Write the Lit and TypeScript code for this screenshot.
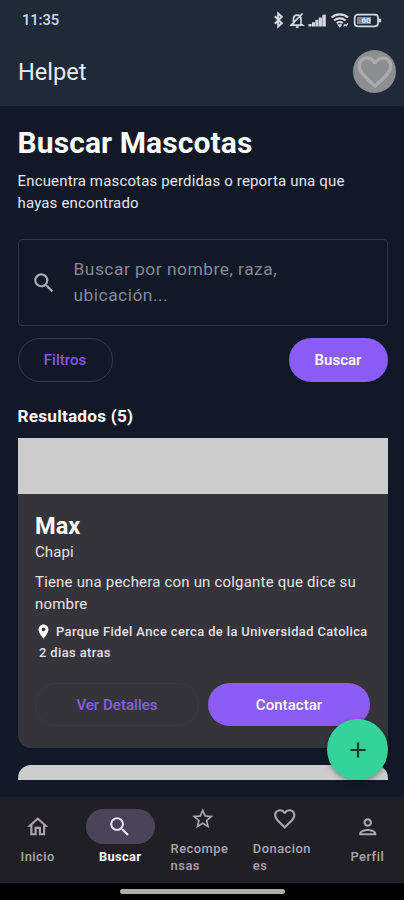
import { LitElement, html, svg, css } from "lit";
import { customElement, property } from "lit/decorators.js";

const ICONS: Record<string, string> = {
  search:
    "M15.5 14h-.79l-.28-.27A6.47 6.47 0 0 0 16 9.5 6.5 6.5 0 1 0 9.5 16c1.61 0 3.09-.59 4.23-1.57l.27.28v.79l5 4.99L20.49 19l-4.99-5zm-6 0C7.01 14 5 11.99 5 9.5S7.01 5 9.5 5 14 7.01 14 9.5 11.99 14 9.5 14z",
  home: "M12 5.69l5 4.5V18h-2v-6H9v6H7v-7.81l5-4.5M12 3L2 12h3v8h6v-6h2v6h6v-8h3L12 3z",
  star: "M22 9.24l-7.19-.62L12 2 9.19 8.63 2 9.24l5.46 4.73L5.82 21 12 17.27 18.18 21l-1.63-7.03L22 9.24zM12 15.4l-3.76 2.27 1-4.28-3.32-2.88 4.38-.38L12 6.1l1.71 4.04 4.38.38-3.32 2.88 1 4.28L12 15.4z",
  heart:
    "M16.5 3c-1.74 0-3.41.81-4.5 2.09C10.91 3.81 9.24 3 7.5 3 4.42 3 2 5.42 2 8.5c0 3.78 3.4 6.86 8.55 11.54L12 21.35l1.45-1.32C18.6 15.36 22 12.28 22 8.5 22 5.42 19.58 3 16.5 3zm-4.4 15.55l-.1.1-.1-.1C7.14 14.24 4 11.39 4 8.5 4 6.5 5.5 5 7.5 5c1.54 0 3.04.99 3.57 2.36h1.87C13.46 5.99 14.96 5 16.5 5c2 0 3.5 1.5 3.5 3.5 0 2.89-3.14 5.74-7.9 10.05z",
  person:
    "M12 6a2 2 0 1 1 0 4 2 2 0 0 1 0-4m0 10c2.7 0 5.8 1.29 6 2H6c.23-.72 3.31-2 6-2m0-12C9.79 4 8 5.79 8 8s1.79 4 4 4 4-1.79 4-4-1.79-4-4-4zm0 10c-2.67 0-8 1.34-8 4v2h16v-2c0-2.66-5.33-4-8-4z",
  place:
    "M12 2C8.13 2 5 5.13 5 9c0 5.25 7 13 7 13s7-7.75 7-13c0-3.87-3.13-7-7-7zm0 9.5a2.5 2.5 0 1 1 0-5 2.5 2.5 0 0 1 0 5z",
  add: "M19 13h-6v6h-2v-6H5v-2h6V5h2v6h6v2z",
};

@customElement("app-icon")
export class AppIcon extends LitElement {
  @property() name = "";
  static styles = css`
    :host { display: block; flex: none; width: 26px; height: 26px; }
    svg { display: block; width: 100%; height: 100%; fill: currentColor; }
  `;
  render() {
    return html`<svg viewBox="0 0 24 24">${svg`<path d=${ICONS[this.name] ?? ""}></path>`}</svg>`;
  }
}

@customElement("status-bar")
export class StatusBar extends LitElement {
  static styles = css`
    :host { display: flex; justify-content: space-between; align-items: center; height: 40px; padding: 0 21.5px 0 22px; color: #d5d9df; }
    .time { font-size: 14.8px; font-weight: 500; letter-spacing: -0.1px; }
    svg { display: block; }
    .level { font: 700 8px "Roboto", sans-serif; fill: #e4e7eb; }
  `;
  render() {
    return html`
      <span class="time">11:35</span>
      <svg width="110" height="18" viewBox="0 0 110 18" fill="none" stroke="#d5d9df" stroke-width="1.7">
        <path d="M1.8 5.3l7 7-3.6 3.3V2.4l3.6 3.3-7 7" stroke-width="2" />
        <path d="M20.5 13V8.4c0-2.4 1.3-4.2 3.7-4.2S28 6 28 8.4V13l1.5 1.2H18.8L20.5 13M22.8 16.2h2.8M17.6 14.7L29.6 2.5" />
        <g fill="#d5d9df" stroke="none">
          <rect x="35.5" y="13" width="3" height="2.5" />
          <rect x="39" y="11.2" width="3" height="4.3" />
          <rect x="42.4" y="8.9" width="3" height="6.6" />
          <rect x="45.8" y="6.5" width="3.1" height="9" />
          <rect x="49.3" y="3.7" width="3.5" height="11.8" />
        </g>
        <path d="M58.5 6.5c4.8-4.2 11.8-4.2 16.6 0M61.1 9.5c3.3-2.8 8.1-2.8 11.4 0M63.8 12.2c1.8-1.4 4.2-1.4 6 0" stroke-width="2.1" />
        <path d="M66.8 15.8l-1.6-2h3.2zM70.5 15.5l1.5-2 1.2 1.4 1.6-2.5" stroke-width="1.1" fill="#d5d9df" />
        <rect x="81.7" y="3.7" width="23.3" height="11.6" rx="3" />
        <path d="M107 7.7v3.6" stroke-width="2.2" />
        <rect x="84" y="6" width="14" height="7" fill="#7f8793" stroke="none" />
        <text class="level" x="88.5" y="12.4" stroke="none">60</text>
      </svg>
    `;
  }
}

@customElement("pet-card")
export class PetCard extends LitElement {
  static styles = css`
    :host { display: block; height: 310px; background: #36343b; border-radius: 0 0 13px 13px; overflow: hidden; color: #e4e2e7; }
    .photo { height: 56px; background: #cccccc; }
    .body { padding: 18px 17.5px 0 17.5px; }
    .name { font-size: 23.6px; line-height: 28px; font-weight: 700; color: #fff; }
    .breed { font-size: 15px; line-height: 22px; letter-spacing: 0.1px; margin-top: 1px; }
    .about { font-size: 15px; line-height: 21.5px; letter-spacing: 0.19px; margin-top: 9px; white-space: nowrap; }
    .meta { font-size: 12.9px; line-height: 21px; letter-spacing: 0.4px; font-weight: 500; }
    .place { display: flex; align-items: center; margin-top: 6px; white-space: nowrap; }
    .place app-icon { width: 17px; height: 17px; color: #fff; margin-right: 4px; }
    .ago { padding-left: 4px; }
    .actions { display: flex; gap: 9px; margin-top: 20px; }
    .btn { flex: 1; height: 43px; box-sizing: border-box; border-radius: 22px; display: flex; align-items: center; justify-content: center; font-size: 15px; font-weight: 500; letter-spacing: 0.04px; }
    .outlined { border: 1px solid #3a3a42; color: #8660df; }
    .filled { background: #8b5cf6; color: #fff; }
  `;
  render() {
    return html`
      <div class="photo"></div>
      <div class="body">
        <div class="name">Max</div>
        <div class="breed">Chapi</div>
        <div class="about">Tiene una pechera con un colgante que dice su<br />nombre</div>
        <div class="meta place"><app-icon name="place"></app-icon><span>Parque Fidel Ance cerca de la Universidad Catolica</span></div>
        <div class="meta ago">2 dias atras</div>
        <div class="actions">
          <div class="btn outlined">Ver Detalles</div>
          <div class="btn filled">Contactar</div>
        </div>
      </div>
    `;
  }
}

const TABS = [
  { icon: "home", lines: ["Inicio"] },
  { icon: "search", lines: ["Buscar"], active: true },
  { icon: "star", lines: ["Recompe", "nsas"] },
  { icon: "heart", lines: ["Donacion", "es"] },
  { icon: "person", lines: ["Perfil"] },
];

@customElement("bottom-nav")
export class BottomNav extends LitElement {
  static styles = css`
    :host { display: flex; gap: 9px; height: 86px; box-sizing: border-box; padding: 0 0 5px 1px; background: #211f26; color: #a9a6b0; }
    .tab { flex: 1; display: flex; flex-direction: column; align-items: center; justify-content: center; }
    .pill { width: 69px; height: 35px; border-radius: 18px; display: flex; align-items: center; justify-content: center; }
    .pill app-icon { width: 25.5px; height: 25.5px; }
    .label { font-size: 12.9px; line-height: 17.2px; font-weight: 500; letter-spacing: 0.48px; margin-top: 4px; white-space: nowrap; }
    .wrapped { margin-right: 6px; }
    .active { color: #fff; }
    .active .pill { background: #4a4458; color: #e8def8; }
    .active .label { font-weight: 700; letter-spacing: 0.3px; }
  `;
  render() {
    return TABS.map(
      (t) => html`<div class="tab ${t.active ? "active" : ""}">
        <div class="pill"><app-icon name=${t.icon}></app-icon></div>
        <div class="label ${t.lines.length > 1 ? "wrapped" : ""}">${t.lines.map((l) => html`<div>${l}</div>`)}</div>
      </div>`
    );
  }
}

@customElement("app-root")
export class AppRoot extends LitElement {
  static styles = css`
    :host { display: flex; flex-direction: column; position: relative; width: 404px; height: 900px; overflow: hidden; background: #111827; color: #fff; font-family: "Roboto", sans-serif; }
    header { height: 106px; flex: none; background: #1f2937; }
    .appbar { display: flex; align-items: center; justify-content: space-between; height: 63px; padding: 0 8px 0 18px; }
    .brand { font-size: 23.6px; color: #e9ebee; }
    .avatar { width: 43px; height: 43px; border-radius: 50%; background: #8c8e90; display: flex; align-items: center; justify-content: center; color: #a9abad; }
    .avatar app-icon { width: 42px; height: 42px; }
    main { height: 674px; flex: none; box-sizing: border-box; padding: 20px 16.5px 0 17.5px; overflow: hidden; }
    h1 { margin: 0; font-size: 30px; line-height: 34px; font-weight: 700; letter-spacing: 0.1px; white-space: nowrap; }
    .lead { margin: 11px 0 0; font-size: 15px; line-height: 21.5px; letter-spacing: 0.16px; color: #e5e7eb; }
    .field { box-sizing: border-box; height: 87px; margin-top: 25px; border: 1.5px solid #303742; border-radius: 4px; display: flex; align-items: center; padding: 0 14px 0 12px; color: #858a95; }
    .field app-icon { color: #a9acb4; margin-right: 17px; }
    .hint { font-size: 17.4px; line-height: 25.8px; letter-spacing: 0.49px; }
    .row { display: flex; justify-content: space-between; margin-top: 12px; }
    .btn { box-sizing: border-box; height: 44px; border-radius: 22px; display: flex; align-items: center; justify-content: center; font-size: 15px; font-weight: 500; letter-spacing: 0.04px; }
    .filters { width: 95px; border: 1px solid #363c47; color: #8458e8; }
    .go { width: 99px; background: #8b5cf6; color: #fff; font-weight: 600; }
    h2 { margin: 22px 0 0; font-size: 17.2px; line-height: 24px; font-weight: 700; letter-spacing: 0.22px; }
    pet-card { margin-top: 10px; }
    .next { height: 30px; margin-top: 17px; border-radius: 13px 13px 0 0; background: #cccccc; }
    .gap { height: 17px; flex: none; }
    .fab { position: absolute; right: 16px; top: 719px; width: 61px; height: 61px; border-radius: 50%; background: #34d399; color: #17372e; display: flex; align-items: center; justify-content: center; box-shadow: 0 2px 5px rgba(0, 0, 0, 0.35); }
    .gesture { height: 17px; background: #000; display: flex; align-items: center; justify-content: center; }
    .gesture i { display: block; width: 165px; height: 5px; border-radius: 3px; background: #b0aeac; }
  `;
  render() {
    return html`
      <header>
        <status-bar></status-bar>
        <div class="appbar">
          <span class="brand">Helpet</span>
          <div class="avatar"><app-icon name="heart"></app-icon></div>
        </div>
      </header>
      <main>
        <h1>Buscar Mascotas</h1>
        <p class="lead">Encuentra mascotas perdidas o reporta una que<br />hayas encontrado</p>
        <div class="field">
          <app-icon name="search"></app-icon>
          <div class="hint">Buscar por nombre, raza,<br />ubicación...</div>
        </div>
        <div class="row">
          <div class="btn filters">Filtros</div>
          <div class="btn go">Buscar</div>
        </div>
        <h2>Resultados (5)</h2>
        <pet-card></pet-card>
        <div class="next"></div>
      </main>
      <div class="gap"></div>
      <bottom-nav></bottom-nav>
      <div class="gesture"><i></i></div>
      <div class="fab"><app-icon name="add"></app-icon></div>
    `;
  }
}
